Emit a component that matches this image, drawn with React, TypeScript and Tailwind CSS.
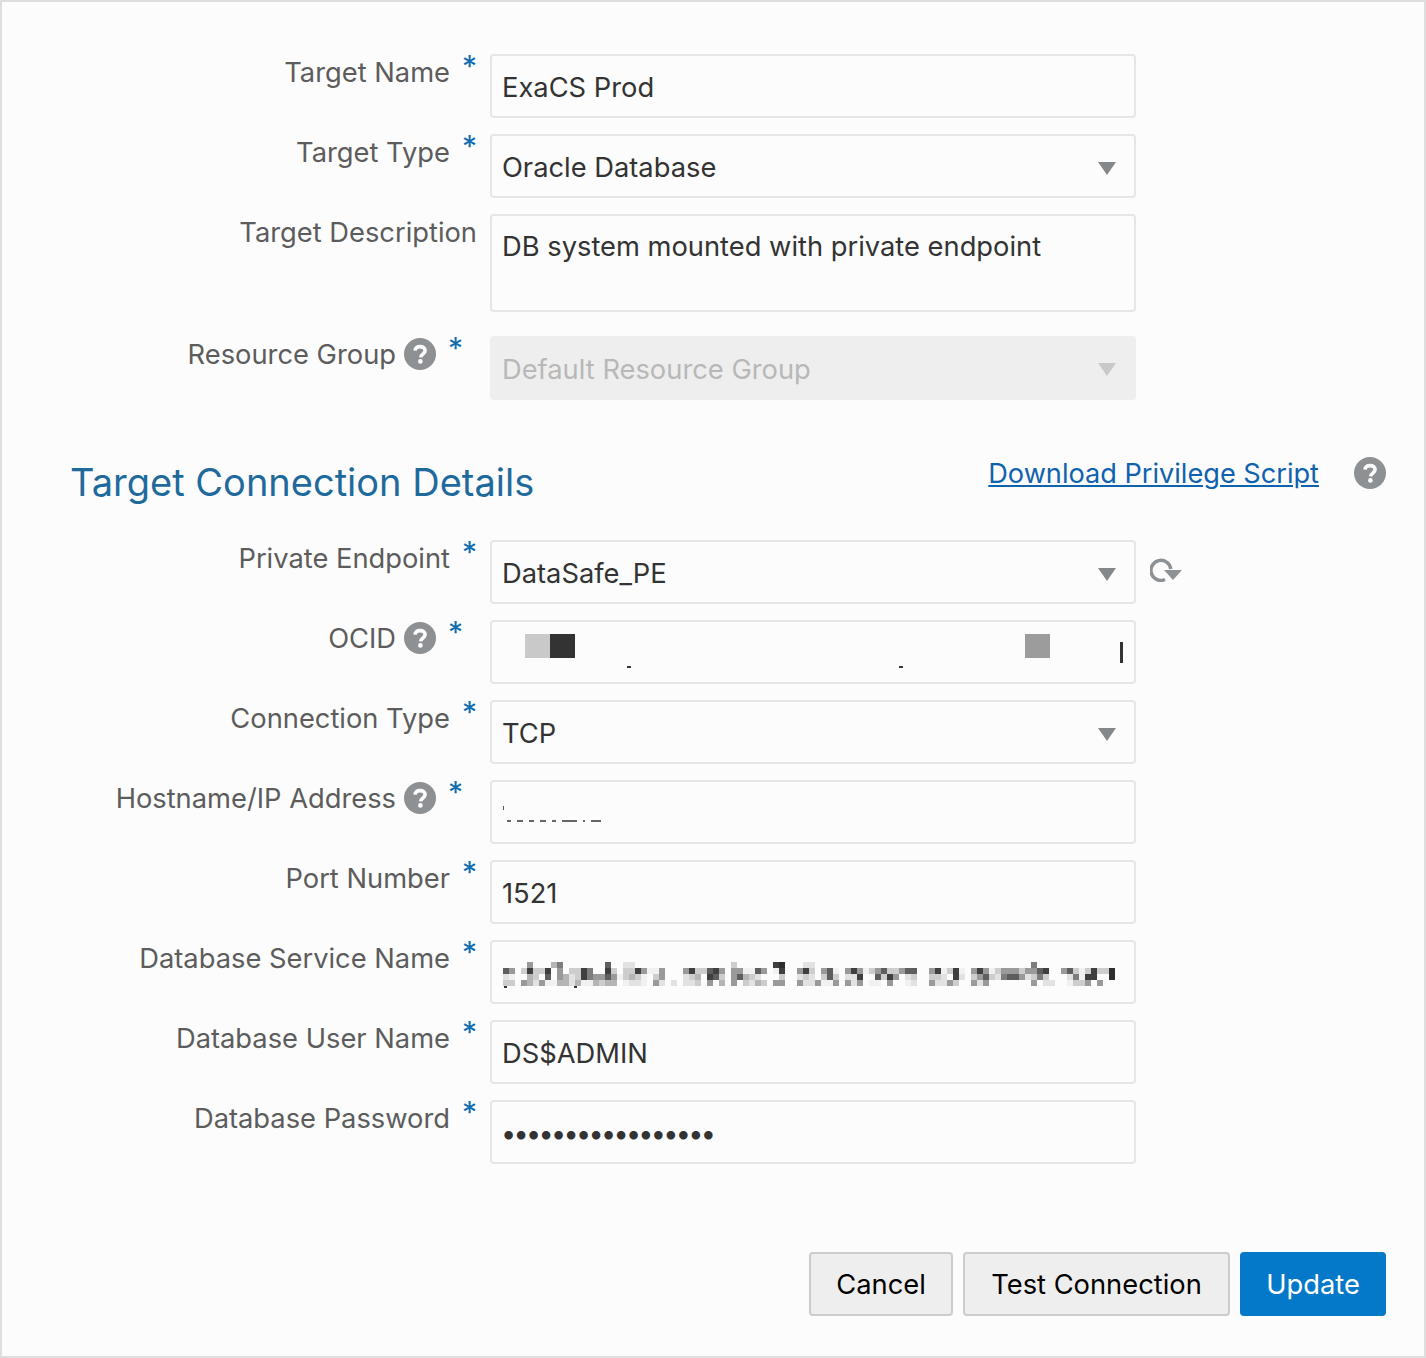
import { ReactNode } from 'react';

const Help = ({ className = '' }: { className?: string }) => (
  <svg viewBox="0 0 32 32" className={`w-8 h-8 shrink-0 ${className}`}>
    <circle cx="16" cy="16" r="16" fill="#8e9194" />
    <path d="M11 12.6c.3-2.6 2.3-4 5.1-4 3 0 5 1.6 5 4 0 3.6-4.2 3.500-4.400 6.800" fill="none" stroke="#fcfcfc" strokeWidth="3.6" />
    <circle cx="16.400" cy="23.400" r="2.300" fill="#fcfcfc" />
  </svg>
);

const Caret = ({ light }: { light?: boolean }) => (
  <svg
    viewBox="0 0 18 14"
    className={`w-[18px] h-[14px] absolute ${light ? 'right-[20px] top-[27px]' : 'right-[18px] top-[26px]'}`}
  >
    <path d="M0 0h18L9 13z" fill={light ? '#c9c9c9' : '#85888a'} />
  </svg>
);

interface RowProps {
  label: string;
  help?: boolean;
  children: ReactNode;
  required?: boolean;
}

const Row = ({ label, help, children, required = true }: RowProps) => (
  <div className="flex items-start">
    <div className="relative w-[475px] h-[40px] flex justify-end items-center text-[#5c5c5c] shrink-0 -mt-[1px]">
      <span className={required ? (help ? 'mr-[8px]' : 'mr-[27px]') : ''}>{label}</span>
      {help && <Help className="mr-[41px] -mt-[2px]" />}
      {required && (
        <span className={`absolute -top-[7px] text-[30px] leading-[40px] text-[#0f6cb0] ${help ? 'right-[14px]' : 'right-0'}`}>*</span>
      )}
    </div>
    <div className="ml-[13px]">{children}</div>
  </div>
);

const Field = ({ children, caret, disabled }: { children?: ReactNode; caret?: boolean; disabled?: boolean }) => (
  <div
    className={`relative w-[646px] h-[64px] rounded-[4px] pt-[3px] flex items-center ${
      disabled ? 'px-[12px] bg-[#eeeeee] text-[#b8b8b8]' : 'px-[10px] border-2 border-[#e6e6e6] text-[#333333]'
    }`}
  >
    {children}
    {caret && <Caret light={disabled} />}
  </div>
);

// the blurred service name, 6px blocks, digit = how dark
const shades = ['', '#f1f1f1', '#e2e2e2', '#cdcdcd', '#b5b5b5', '#9a9a9a', '#7d7d7d', '#5e5e5e', '#3f3f3f', '#2e2e2e'];
const mosaicRows = [
  '....5...46.......7..22................3......89...22....................................6',
  '75.38338.5.3386..83.3385115...5833785.551175.18..583.571.585135733577..581381.5851355535578..573138339',
  '21..43.7.542386557513431.35...234.873.57432...3..232.373.228..7385.23..332.82.3573267752363...26188..9',
  '33.5425114424114344.1221.52.2.223.5.4.5.3243.55..5225115.525.11.5..12..52253..525.......5.22..1335.5',
];

const Mosaic = () => (
  <svg viewBox="0 0 612 26" className="w-[612px] h-[26px] mt-[3px] ml-[1px]" shapeRendering="crispEdges">
    {mosaicRows.map((row, y) =>
      row.split('').map((c, x) =>
        c === '.' ? null : <rect key={`${y}-${x}`} x={x * 6} y={y * 6} width="6" height="6" fill={shades[Number(c)]} />
      )
    )}
    <rect x="1" y="24" width="3" height="2" fill="#333333" />
    <rect x="71" y="24" width="3" height="2" fill="#333333" />
  </svg>
);

const hostDashes = ['w-[4px]', 'w-[6px]', 'w-[5px]', 'w-[6px]', 'w-[4px]', 'w-[15px]', 'w-[2px]', 'w-[10px]'];

export default function App() {
  return (
    <div
      className="w-[1426px] h-[1358px] bg-[#fcfcfc] border-2 border-[#dedede] text-[27.3px] leading-[36px] overflow-hidden"
      style={{ fontFamily: 'Inter, sans-serif' }}
    >
      <div className="pt-[52px] flex flex-col gap-4">
        <Row label="Target Name">
          <Field>ExaCS Prod</Field>
        </Row>
        <Row label="Target Type">
          <Field caret>Oracle Database</Field>
        </Row>
        <Row label="Target Description" required={false}>
          <div className="w-[646px] h-[98px] rounded-[4px] border-2 border-[#e6e6e6] px-[10px] pt-[13px] text-[#333333]">
            DB system mounted with private endpoint
          </div>
        </Row>
        <div className="mt-2">
          <Row label="Resource Group" help>
            <Field caret disabled>Default Resource Group</Field>
          </Row>
        </div>
      </div>

      <div className="flex items-center justify-between pl-[68px] pr-[38px] mt-[54px] h-[58px]">
        <h2 className="text-[38px] leading-[58px] text-[#1f6a9c] -mt-[2px]">Target Connection Details</h2>
        <div className="flex items-center -mt-[20px]">
          <a href="#" className="text-[27.15px] text-[#0f62ad] underline pt-[1px]">Download Privilege Script</a>
          <Help className="ml-[35px]" />
        </div>
      </div>

      <div className="mt-[28px] flex flex-col gap-4">
        <Row label="Private Endpoint">
          <div className="flex items-center">
            <Field caret>DataSafe_PE</Field>
            <svg viewBox="0 0 32 26" className="w-8 h-[26px] ml-[14px] -mt-[6px]">
              <path d="M15 23.500A10 10 0 1 1 20.800 13" fill="none" stroke="#8e9194" strokeWidth="3.500" />
              <path d="M14 14h18l-9 10z" fill="#8e9194" />
            </svg>
          </div>
        </Row>
        <Row label="OCID" help>
          <Field>
            <div className="absolute left-[33px] top-[12px] flex">
              <div className="w-[25px] h-[24px] bg-[#c9c9c9]" />
              <div className="w-[25px] h-[24px] bg-[#333333]" />
            </div>
            <div className="absolute left-[533px] top-[12px] w-[25px] h-[24px] bg-[#9c9c9c]" />
            <div className="absolute left-[135px] top-[44px] w-[4px] h-[2px] bg-[#333333]" />
            <div className="absolute left-[407px] top-[44px] w-[4px] h-[2px] bg-[#333333]" />
            <div className="absolute left-[628px] top-[20px] w-[3px] h-[21px] bg-[#333333]" />
          </Field>
        </Row>
        <Row label="Connection Type">
          <Field caret>TCP</Field>
        </Row>
        <Row label="Hostname/IP Address" help>
          <Field>
            <div className="absolute left-[11px] top-[24px] w-[1px] h-[4px] bg-[#555555]" />
            <div className="absolute left-[15px] top-[38px] flex gap-[6px]">
              {hostDashes.map((w, i) => (
                <div key={i} className={`${w} h-[2px] bg-[#666666]`} />
              ))}
            </div>
          </Field>
        </Row>
        <Row label="Port Number">
          <Field>1521</Field>
        </Row>
        <Row label="Database Service Name">
          <Field>
            <Mosaic />
          </Field>
        </Row>
        <Row label="Database User Name">
          <Field>DS$ADMIN</Field>
        </Row>
        <Row label="Database Password">
          <Field>
            <span className="text-[27px] tracking-[-2.7px] -ml-[1px] mt-[1px]">•••••••••••••••••</span>
          </Field>
        </Row>
      </div>

      <div className="flex justify-end gap-[10px] pr-[38px] mt-[88px]">
        <button className="h-16 w-[144px] rounded-[4px] border-2 border-[#cccccc] bg-[#eeeeee] text-black pt-[2px]">Cancel</button>
        <button className="h-16 w-[267px] rounded-[4px] border-2 border-[#cccccc] bg-[#eeeeee] text-black pt-[2px]">Test Connection</button>
        <button className="h-16 w-[146px] rounded-[4px] bg-[#0478c9] text-white pt-[2px]">Update</button>
      </div>
    </div>
  );
}
